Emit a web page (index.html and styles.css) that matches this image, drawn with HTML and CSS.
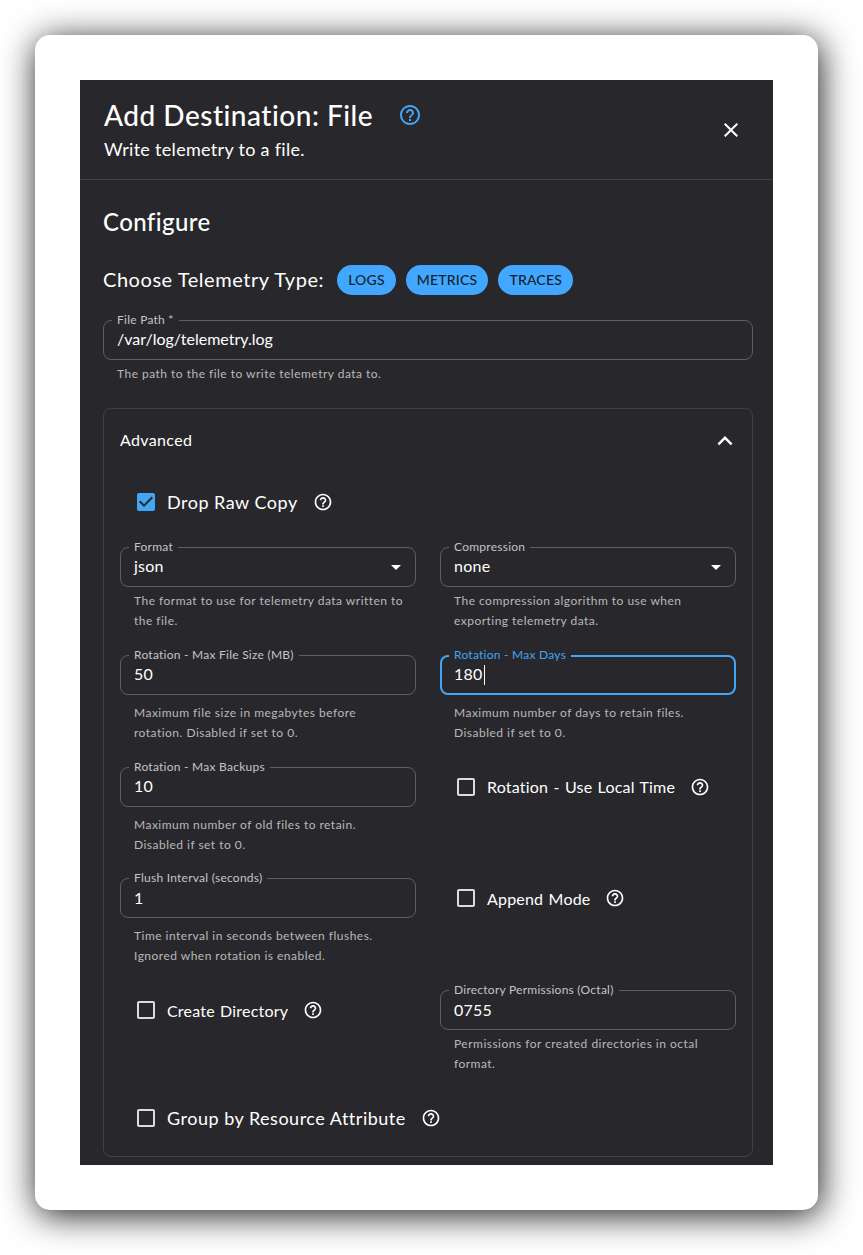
FILE: index.html
```html
<!DOCTYPE html>
<html lang="en">
<head>
  <meta charset="UTF-8" />
  <title>Add Destination: File</title>
  <link rel="stylesheet" href="styles.css">
</head>
<body>
  <svg class="sprite" xmlns="http://www.w3.org/2000/svg">
    <symbol id="i-help" viewBox="0 0 24 24"><path d="M11 18h2v-2h-2v2zm1-16C6.48 2 2 6.48 2 12s4.48 10 10 10 10-4.48 10-10S17.52 2 12 2zm0 18c-4.41 0-8-3.59-8-8s3.59-8 8-8 8 3.59 8 8-3.59 8-8 8zm0-14c-2.21 0-4 1.79-4 4h2c0-1.1.9-2 2-2s2 .9 2 2c0 2-3 1.75-3 5h2c0-2.25 3-2.5 3-5 0-2.21-1.79-4-4-4z"/></symbol>
    <symbol id="i-close" viewBox="0 0 24 24"><path d="M19 6.41L17.59 5 12 10.59 6.41 5 5 6.41 10.59 12 5 17.59 6.41 19 12 13.41 17.59 19 19 17.59 13.41 12 19 6.41z"/></symbol>
    <symbol id="i-up" viewBox="0 0 24 24"><path d="M12 8l-6 6 1.41 1.41L12 10.83l4.59 4.58L18 14z"/></symbol>
    <symbol id="i-arrow" viewBox="0 0 24 24"><path d="M7 10l5 5 5-5z"/></symbol>
    <symbol id="i-checked" viewBox="0 0 24 24"><path d="M19 3H5c-1.11 0-2 .9-2 2v14c0 1.1.89 2 2 2h14c1.11 0 2-.9 2-2V5c0-1.1-.89-2-2-2zm-9 14l-5-5 1.41-1.41L10 14.17l7.59-7.59L19 8l-9 9z"/></symbol>
    <symbol id="i-unchecked" viewBox="0 0 24 24"><path d="M19 5v14H5V5h14m0-2H5c-1.1 0-2 .9-2 2v14c0 1.1.9 2 2 2h14c1.1 0 2-.9 2-2V5c0-1.1-.9-2-2-2z"/></symbol>
  </svg>

  <div class="frame">
    <div class="dialog">
      <header class="dialog-header">
        <div class="dialog-titles">
          <h1 class="dialog-title">Add Destination: File <svg class="icon-title-help"><use href="#i-help"/></svg></h1>
          <p class="dialog-subtitle">Write telemetry to a file.</p>
        </div>
        <svg class="icon-close"><use href="#i-close"/></svg>
      </header>

      <main class="dialog-body">
        <h2 class="section-title">Configure</h2>

        <div class="telemetry-row">
          <span class="telemetry-label">Choose Telemetry Type:</span>
          <span class="chip">LOGS</span>
          <span class="chip">METRICS</span>
          <span class="chip">TRACES</span>
        </div>

        <div class="field-wrap path-field">
          <div class="field">
            <span class="field-label">File Path *</span>
            <span class="field-value path-value">/var/log/telemetry.log</span>
          </div>
          <p class="helper">The path to the file to write telemetry data to.</p>
        </div>

        <section class="advanced">
          <div class="advanced-header">
            <span class="advanced-title">Advanced</span>
            <svg class="icon-chevron"><use href="#i-up"/></svg>
          </div>

          <div class="advanced-grid">
            <label class="check check-large span-2">
              <svg class="check-box checked"><use href="#i-checked"/></svg>
              <span>Drop Raw Copy</span>
              <svg class="icon-help"><use href="#i-help"/></svg>
            </label>

            <div class="field-wrap">
              <div class="field">
                <span class="field-label">Format</span>
                <span class="field-value">json</span>
                <svg class="icon-arrow"><use href="#i-arrow"/></svg>
              </div>
              <p class="helper">The format to use for telemetry data written to the file.</p>
            </div>

            <div class="field-wrap">
              <div class="field">
                <span class="field-label">Compression</span>
                <span class="field-value">none</span>
                <svg class="icon-arrow"><use href="#i-arrow"/></svg>
              </div>
              <p class="helper">The compression algorithm to use when exporting telemetry data.</p>
            </div>

            <div class="field-wrap">
              <div class="field">
                <span class="field-label">Rotation - Max File Size (MB)</span>
                <span class="field-value">50</span>
              </div>
              <p class="helper helper-number">Maximum file size in megabytes before rotation. Disabled if set to 0.</p>
            </div>

            <div class="field-wrap">
              <div class="field focused">
                <span class="field-label">Rotation - Max Days</span>
                <span class="field-value">180<span class="caret"></span></span>
              </div>
              <p class="helper helper-number">Maximum number of days to retain files. Disabled if set to 0.</p>
            </div>

            <div class="field-wrap">
              <div class="field">
                <span class="field-label">Rotation - Max Backups</span>
                <span class="field-value">10</span>
              </div>
              <p class="helper helper-number">Maximum number of old files to retain. Disabled if set to 0.</p>
            </div>

            <label class="check">
              <svg class="check-box"><use href="#i-unchecked"/></svg>
              <span>Rotation - Use Local Time</span>
              <svg class="icon-help"><use href="#i-help"/></svg>
            </label>

            <div class="field-wrap">
              <div class="field">
                <span class="field-label">Flush Interval (seconds)</span>
                <span class="field-value">1</span>
              </div>
              <p class="helper helper-number">Time interval in seconds between flushes. Ignored when rotation is enabled.</p>
            </div>

            <label class="check">
              <svg class="check-box"><use href="#i-unchecked"/></svg>
              <span>Append Mode</span>
              <svg class="icon-help"><use href="#i-help"/></svg>
            </label>

            <label class="check">
              <svg class="check-box"><use href="#i-unchecked"/></svg>
              <span>Create Directory</span>
              <svg class="icon-help"><use href="#i-help"/></svg>
            </label>

            <div class="field-wrap">
              <div class="field">
                <span class="field-label">Directory Permissions (Octal)</span>
                <span class="field-value">0755</span>
              </div>
              <p class="helper">Permissions for created directories in octal format.</p>
            </div>

            <label class="check check-large span-2">
              <svg class="check-box"><use href="#i-unchecked"/></svg>
              <span>Group by Resource Attribute</span>
              <svg class="icon-help"><use href="#i-help"/></svg>
            </label>
          </div>
        </section>
      </main>
    </div>
  </div>
</body>
</html>
```

FILE: styles.css
```css
* {
  box-sizing: border-box;
}
html, body {
  height: 100%;
}
body {
  margin: 0;
  padding: 35px 45px 45px 35px;
  background-color: #ffffff;
  color: #ffffff;
  font-family: "Lato", "Noto Sans", sans-serif;
  letter-spacing: 0.25px;
  overflow: hidden;
}
.sprite {
  display: none;
}
svg {
  fill: currentColor;
  flex: none;
}
.frame {
  width: 783px;
  height: 1175px;
  padding: 45px;
  background-color: #ffffff;
  border-radius: 15px;
  box-shadow: 2px 5px 35px rgba(0, 0, 0, 0.9);
}
.dialog {
  height: 1085px;
  background-color: #28282c;
  overflow: hidden;
}
.dialog-header {
  display: flex;
  justify-content: space-between;
  align-items: center;
  height: 100px;
  padding: 0 30px 0 24px;
  border-bottom: 1px solid #434347;
}
.dialog-titles {
  align-self: flex-start;
  padding-top: 18px;
}
.dialog-title {
  display: flex;
  align-items: center;
  gap: 25px;
  margin: 0;
  font-size: 28px;
  font-weight: 500;
  line-height: 34px;
  letter-spacing: 0.5px;
}
.icon-title-help {
  width: 24px;
  height: 24px;
  color: #42a5f5;
}
.dialog-subtitle {
  margin: 5px 0 0;
  font-size: 18px;
  line-height: 24px;
  letter-spacing: 0.3px;
}
.icon-close {
  width: 24px;
  height: 24px;
}
.dialog-body {
  padding: 27px 20px 0 23px;
}
.section-title {
  margin: 0;
  font-size: 24px;
  font-weight: 500;
  line-height: 30px;
  letter-spacing: 0.4px;
}
.telemetry-row {
  display: flex;
  align-items: center;
  gap: 10px;
  margin-top: 28px;
}
.telemetry-label {
  margin-right: 3px;
  margin-bottom: 2px;
  font-size: 20px;
  letter-spacing: 0.55px;
}
.chip {
  height: 30px;
  padding: 0 11px;
  border-radius: 15px;
  background-color: #42a7ff;
  color: #14222e;
  font-size: 14px;
  font-weight: 500;
  line-height: 30px;
  letter-spacing: 0.2px;
}
.path-field {
  margin-top: 25px;
}
.field {
  position: relative;
  display: flex;
  align-items: center;
  height: 40px;
  padding: 0 13px;
  border: 1px solid #5f5f63;
  border-radius: 8px;
}
.field-label {
  position: absolute;
  top: -8px;
  left: 8px;
  padding: 0 5px;
  background-color: #28282c;
  color: #c4c4c6;
  font-size: 12px;
  line-height: 14px;
  white-space: nowrap;
}
.field-value {
  margin-bottom: 2px;
  font-size: 16px;
}
.path-value {
  margin-bottom: 3px;
  letter-spacing: 0;
}
.field.focused {
  border: 2px solid #42a5f5;
  padding: 0 12px;
}
.field.focused .field-label {
  top: -9px;
  left: 7px;
  color: #42a5f5;
}
.field.focused .field-value {
  margin-bottom: 0;
}
.caret {
  display: inline-block;
  width: 1px;
  height: 20px;
  margin-left: 1px;
  background-color: #ffffff;
  vertical-align: -5px;
}
.icon-arrow {
  position: absolute;
  top: 7px;
  right: 7px;
  width: 24px;
  height: 24px;
}
.helper {
  margin: 4px 0 0;
  padding: 0 11px 0 14px;
  color: #b8b8ba;
  font-size: 12px;
  line-height: 19.92px;
  letter-spacing: 0.48px;
}
.helper-number {
  margin-top: 8px;
}
.advanced {
  margin-top: 24px;
  padding: 0 16px 18px;
  border: 1px solid #414145;
  border-radius: 8px;
}
.advanced-header {
  display: flex;
  justify-content: space-between;
  align-items: center;
  height: 64px;
  font-size: 16px;
  letter-spacing: 0.35px;
}
.advanced-title {
  margin-bottom: 2px;
}
.icon-chevron {
  width: 30px;
  height: 30px;
  margin-right: -4px;
}
.advanced-grid {
  display: grid;
  grid-template-columns: 1fr 1fr;
  gap: 24px;
  padding-top: 10px;
}
.span-2 {
  grid-column: span 2;
}
.check {
  display: flex;
  align-items: center;
  height: 40px;
  padding-left: 14px;
  font-size: 16px;
  letter-spacing: 0.2px;
  word-spacing: 1px;
}
.check-large {
  font-size: 18px;
  letter-spacing: 0.5px;
  word-spacing: 0;
}
.check-large:first-child {
  margin-top: -1px;
  margin-bottom: 1px;
}
.check-box {
  width: 24px;
  height: 24px;
  margin-right: 9px;
  color: #dcdcdc;
}
.check-box.checked {
  color: #42a5f5;
}
.icon-help {
  width: 20px;
  height: 20px;
  margin-left: 15px;
}
```
